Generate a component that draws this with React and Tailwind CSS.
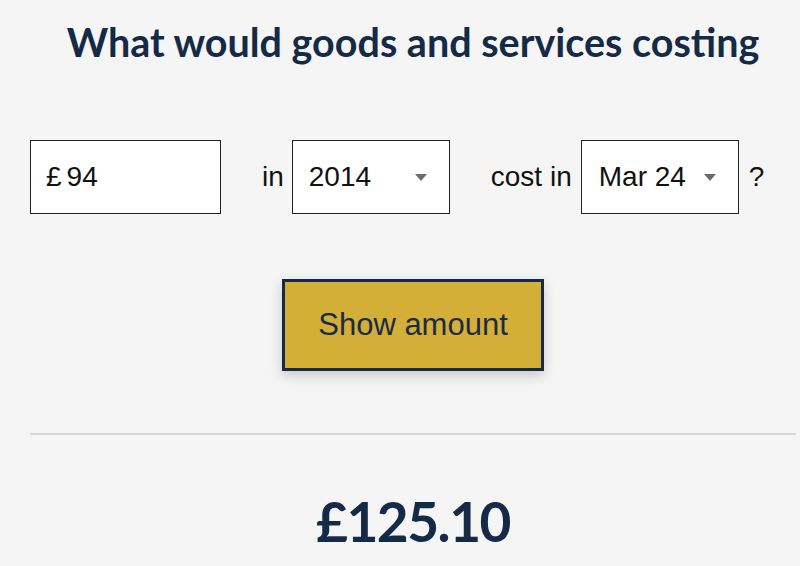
import React from "react";

function Arrow() {
  return (
    <svg width="12" height="7" viewBox="0 0 12 7" className="ml-auto">
      <path d="M0 0 L12 0 L6 7 Z" fill="#6b6b6b" />
    </svg>
  );
}

export default function App() {
  return (
    <div className="min-h-[566px] w-[800px] overflow-hidden bg-[#f5f5f5]">
      <div className="ml-[30px] w-[766px]">
        <h1
          className="pt-[19px] text-center text-[39.5px] font-bold leading-[46px] text-[#142a46]"
          style={{ fontFamily: "Lato, sans-serif" }}
        >
          What would goods and services costing
        </h1>
        <div
          className="mt-[75px] flex items-center text-[28px] text-[#111]"
          style={{ fontFamily: "'Liberation Sans', Arial, sans-serif" }}
        >
          <div className="flex h-[74px] w-[191px] items-center border-[1.5px] border-[#222] bg-white pl-[15px]">
            <span>£</span>
            <span className="ml-[5px]">94</span>
          </div>
          <span className="ml-[41px]">in</span>
          <div className="ml-[8px] flex h-[74px] w-[158px] items-center border-[1.5px] border-[#222] bg-white pl-[16px] pr-[22px]">
            <span>2014</span>
            <Arrow />
          </div>
          <span className="ml-[41px]">cost in</span>
          <div className="ml-[9px] flex h-[74px] w-[158px] items-center border-[1.5px] border-[#222] bg-white pl-[17px] pr-[22px]">
            <span>Mar 24</span>
            <Arrow />
          </div>
          <span className="ml-[10px]">?</span>
        </div>
        <div className="mt-[65px] flex justify-center">
          <button
            className="h-[92px] w-[262px] border-[3px] border-[#15294a] bg-[#d4af37] text-[31px] text-[#1a2b45] shadow-[0_5px_12px_rgba(0,0,0,0.18)]"
            style={{ fontFamily: "'Liberation Sans', Arial, sans-serif" }}
          >
            Show amount
          </button>
        </div>
        <div className="mt-[62px] h-[2px] w-full bg-[#d6d6d6]" />
        <div
          className="mt-[52px] text-center text-[55px] font-bold leading-[68px] tracking-[-1.5px] text-[#142a46]"
          style={{ fontFamily: "Lato, sans-serif" }}
        >
          £125.10
        </div>
      </div>
    </div>
  );
}
